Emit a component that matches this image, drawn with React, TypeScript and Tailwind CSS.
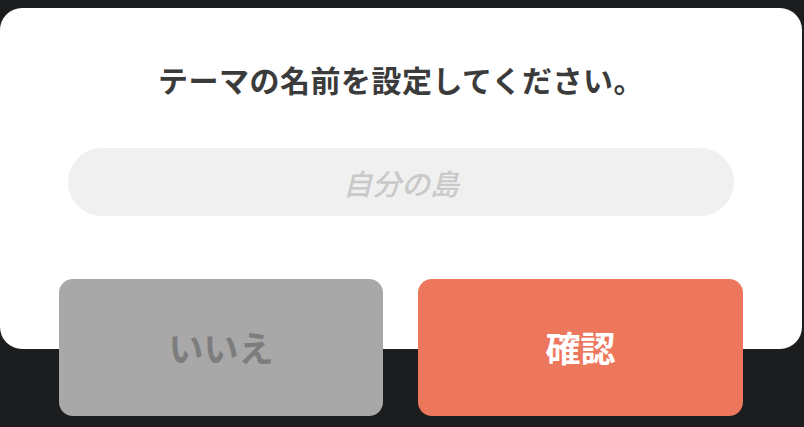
import React from 'react';

const FONT = '"Noto Sans CJK JP", "Noto Sans", sans-serif';

export default function App() {
  return (
    <main
      className="h-[427px] w-[804px] overflow-hidden bg-[#1b1d1f]"
      style={{ fontFamily: FONT }}
    >
      <div className="pr-[2px] pt-[8px]">
        <section className="flex w-[802px] flex-col items-center rounded-[22px] bg-white pt-[49px]">
          <h1 className="text-[30px] font-bold leading-[44px] tracking-[0.5px] text-[#3b3b3b]">
            テーマの名前を設定してください。
          </h1>
          <input
            type="text"
            placeholder="自分の島"
            className="mt-[47px] h-[68px] w-[666px] rounded-full bg-[#f0f0f0] text-center text-[29px] font-medium italic text-[#444] outline-none placeholder:text-[#c9c9c9]"
          />
          <div className="-mb-[67px] mt-[63px] flex gap-[35px]">
            <button
              type="button"
              className="flex h-[137px] w-[324px] items-center justify-center rounded-[14px] bg-[#a8a8a8] text-[35px] font-bold text-[#7d7d7d]"
            >
              いいえ
            </button>
            <button
              type="button"
              className="flex h-[137px] w-[325px] items-center justify-center rounded-[14px] bg-[#ed775c] text-[35px] font-bold text-white"
            >
              確認
            </button>
          </div>
        </section>
      </div>
    </main>
  );
}
